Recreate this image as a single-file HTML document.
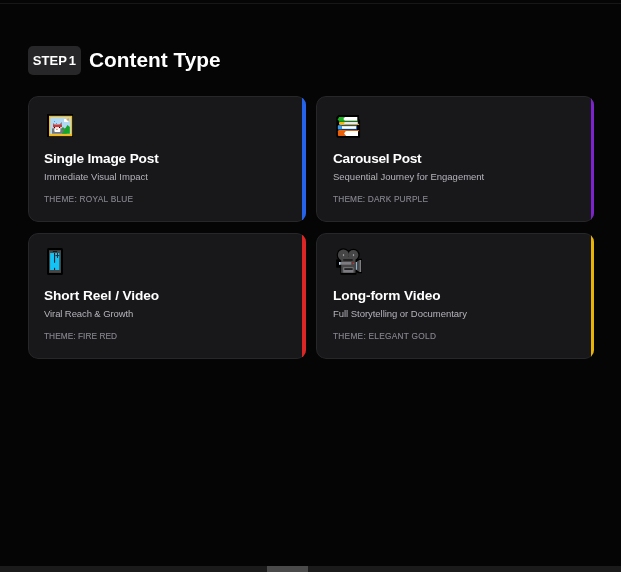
<!DOCTYPE html>
<html><head><meta charset="utf-8">
<style>
html,body{margin:0;padding:0;background:#050505;}
body{width:621px;height:572px;overflow:hidden;position:relative;font-family:"Liberation Sans",sans-serif;color:#fff;}
.topline{position:absolute;left:0;top:3px;width:621px;height:1px;background:#17171a;}
.badge{position:absolute;left:28px;top:46px;width:53px;height:28.8px;border-radius:5px;background:#27272a;color:#fff;font-weight:700;font-size:13px;letter-spacing:0.05px;word-spacing:-1.6px;line-height:30px;text-align:center;}
.title{position:absolute;left:89px;top:46px;font-size:20.8px;font-weight:700;line-height:28px;white-space:nowrap;letter-spacing:0.02px;}
.card{position:absolute;width:277.6px;height:126px;background:#18181b;border-radius:10px 9px 9px 10px;overflow:hidden;}
.card::before{content:"";position:absolute;left:0;top:0;right:0;bottom:0;border:1px solid #27272a;border-radius:10px 9px 9px 10px;}
.card b{position:absolute;right:0;top:0;bottom:0;width:3.6px;}
.badge,.title,.card h3,.card p,.card .th{will-change:transform;}
.card h3{position:absolute;left:16px;top:55px;margin:0;font-size:13.7px;font-weight:700;line-height:16px;white-space:nowrap;letter-spacing:0.05px;}
.card p{position:absolute;left:16px;top:75px;margin:0;font-size:9.5px;color:#b4b4bb;line-height:12px;white-space:nowrap;letter-spacing:0.27px;}
.card .th{position:absolute;left:16px;top:98px;font-size:8.3px;color:#878790;-webkit-text-stroke:0.12px #878790;letter-spacing:0.34px;line-height:10px;white-space:nowrap;}
svg.ico{position:absolute;overflow:visible;}
.sb{position:absolute;left:0;top:566px;width:621px;height:6px;background:#1b1b1c;}
.sb i{position:absolute;left:267px;top:0;width:41px;height:6px;background:#4a4a4b;}
</style></head><body>
<div class="topline"></div>
<div class="badge">STEP 1</div>
<div class="title">Content Type</div>

<div class="card" style="left:28px;top:96px"><b style="background:#2563eb"></b>
<h3 style="letter-spacing:-.2px">Single Image Post</h3><p style="letter-spacing:0px">Immediate Visual Impact</p><div class="th" style="letter-spacing:0.27px">THEME: ROYAL BLUE</div></div>

<div class="card" style="left:316px;top:96px;width:278px"><b style="width:3.1px;background:#7e22ce"></b>
<h3 style="left:17px;letter-spacing:-.28px">Carousel Post</h3><p style="left:17px;letter-spacing:-.01px">Sequential Journey for Engagement</p><div class="th" style="left:17px;letter-spacing:0.16px">THEME: DARK PURPLE</div></div>

<div class="card" style="left:28px;top:233px"><b style="background:#dc2626"></b>
<h3 style="letter-spacing:-.1px">Short Reel / Video</h3><p style="letter-spacing:-.1px">Viral Reach &amp; Growth</p><div class="th" style="letter-spacing:0.05px">THEME: FIRE RED</div></div>

<div class="card" style="left:316px;top:233px;width:278px"><b style="width:3.1px;background:#eab308"></b>
<h3 style="left:17px;letter-spacing:-.12px">Long-form Video</h3><p style="left:17px;letter-spacing:-.04px">Full Storytelling or Documentary</p><div class="th" style="left:17px;letter-spacing:0.27px">THEME: ELEGANT GOLD</div></div>

<!-- picture icon -->
<svg class="ico" style="left:44px;top:111px" width="32" height="32" viewBox="44 111 32 32">
<rect x="47" y="114" width="26" height="23" fill="#000"/>
<rect x="49" y="115.8" width="23.2" height="20.4" fill="#f7b80f"/>
<rect x="50.2" y="117" width="20.8" height="17.2" fill="#b3d8f1"/>
<rect x="64" y="119" width="4.3" height="2.9" fill="#fff"/>
<path d="M66.2 119.6 L68.2 118.2 L69 118.4 L69 120.8 L67.6 120.8 Z" fill="#f5a623"/>
<rect x="54.1" y="121.1" width="0.9" height="0.9" fill="#2f8fe6"/><rect x="56" y="123" width="0.9" height="0.9" fill="#2f8fe6"/>
<path d="M53 127 L53 123.1 L54.6 124.4 L59.5 124.4 L61.8 122.1 L61.8 127 Z" fill="#75767b"/>
<rect x="53.6" y="127" width="7.6" height="2" fill="#d6ebf7"/>
<rect x="53" y="124.9" width="8.9" height="2.1" fill="#ee2a24"/>
<rect x="53.9" y="127" width="1.2" height="1" fill="#111"/><rect x="59" y="127" width="1.2" height="1" fill="#111"/>
<path d="M52 133.8 L52 128.6 L54.5 128 L55 131.9 L60.2 131.9 L60.4 128.2 L66.7 128.2 L66.7 133.8 Z" fill="#75767b"/>
<rect x="54.4" y="128.8" width="5.8" height="3.1" rx="0.9" fill="#fff"/>
<rect x="56.1" y="129" width="1.6" height="0.8" fill="#f26a1b"/>
<path d="M61.8 133.8 L67.5 124.9 L69.8 127 L69.8 133.8 Z" fill="#16a626"/>
<rect x="62" y="127.2" width="1.9" height="2.6" rx="0.8" fill="#16a626"/>
</svg>

<!-- books icon -->
<svg class="ico" style="left:332px;top:111px" width="32" height="32" viewBox="332 111 32 32">
<path d="M338.7 114.9 H358.9 V119.6 H360.1 V137.8 H337.6 L336.4 136.6 V117 Z" fill="#000"/>
<path d="M339 116.9 H344.9 V121.6 H339 L337.9 119.2 Z" fill="#1db321"/>
<rect x="339" y="120.7" width="18.8" height="1.1" fill="#159a18"/>
<path d="M344.9 116.9 H357.3 V120.8 H344.9 L343.3 119 Z" fill="#fff"/>
<rect x="339" y="121.9" width="6" height="2.9" rx="0.8" fill="#f7b50e"/>
<rect x="340.2" y="123.8" width="18.9" height="1.1" fill="#f7b50e"/>
<rect x="344.4" y="122.1" width="13.4" height="1.8" fill="#fff"/>
<rect x="337.9" y="125.2" width="19.1" height="4.4" rx="0.6" fill="#1a6fd0"/>
<rect x="337.9" y="125.5" width="3.9" height="3.8" rx="0.6" fill="#3b9ae8"/>
<rect x="342" y="126.2" width="14" height="2.6" fill="#fff"/>
<rect x="337.9" y="130.2" width="8" height="5.8" rx="1" fill="#e8600c"/>
<rect x="338.7" y="130.1" width="20.4" height="1.1" fill="#f26a0e"/>
<path d="M345.9 131.1 H358 V136 H345.9 L344.1 133.3 Z" fill="#fff"/>
</svg>

<!-- phone icon -->
<svg class="ico" style="left:40px;top:246px" width="32" height="32" viewBox="40 246 32 32">
<rect x="47" y="248" width="16" height="27.1" rx="1.6" fill="#000"/>
<rect x="49" y="250.2" width="12" height="22.7" fill="#464646"/>
<rect x="50.1" y="253" width="9.2" height="17" fill="#14c3f6"/>
<rect x="52.9" y="251" width="4.2" height="0.9" fill="#111"/>
<rect x="54" y="253" width="1.1" height="9.8" fill="#123"/>
<rect x="54" y="267.8" width="1.1" height="2.2" fill="#123"/>
<rect x="55.4" y="255.2" width="3.9" height="0.9" fill="#123"/>
<rect x="57" y="253" width="0.9" height="5" fill="#123"/>
</svg>

<!-- camera icon -->
<svg class="ico" style="left:332px;top:246px" width="32" height="32" viewBox="332 246 32 32">
<g fill="#000">
<circle cx="343.4" cy="255" r="6.7"/><circle cx="353.4" cy="255" r="6.3"/>
<rect x="340.3" y="258" width="16.2" height="16.8" rx="0.8"/>
<rect x="336.2" y="259.2" width="6" height="8.6" rx="0.6"/>
<path d="M355 260.6 L358.6 258.8 H362 V273.2 H358.6 L355 271.4 Z"/>
</g>
<circle cx="343.4" cy="255" r="5.5" fill="#464646"/><circle cx="353.3" cy="255" r="5.1" fill="#464646"/>
<rect x="341.2" y="257" width="14.3" height="15.9" fill="#464646"/>
<rect x="342.9" y="254.1" width="1.2" height="2" fill="#9a9aa0"/><rect x="352.9" y="254.1" width="1.2" height="2" fill="#9a9aa0"/>
<rect x="343.2" y="259.1" width="9.5" height="1.7" fill="#1c1c1c"/>
<rect x="339" y="262" width="12.3" height="2.7" fill="#7c7c82"/>
<rect x="339" y="262" width="1.4" height="2.7" fill="#b3d8f1"/>
<circle cx="353.5" cy="263.5" r="0.8" fill="#e22"/>
<rect x="355.8" y="262" width="1.1" height="7.8" fill="#a8d4f0"/>
<path d="M356.9 261.6 L359.5 260 H361.1 V272 H359.5 L356.9 270.3 Z" fill="#464646"/>
<rect x="359.7" y="260" width="1.4" height="12" fill="#7c7c82"/>
<rect x="343.2" y="267.3" width="10.3" height="5.3" fill="#7c7c82"/>
<rect x="344.3" y="268.3" width="8.4" height="1.5" fill="#0a0a0a"/>
</svg>

<div class="sb"><i></i></div>
</body></html>
